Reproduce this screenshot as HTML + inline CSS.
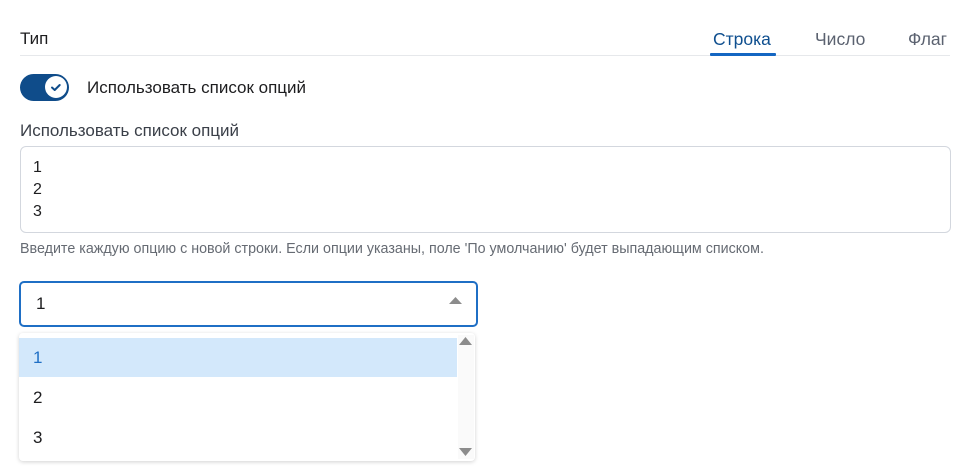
<!DOCTYPE html>
<html><head><meta charset="utf-8"><style>
*{box-sizing:border-box;margin:0;padding:0}
body{width:974px;height:471px;background:#fff;font-family:"Liberation Sans",Arial,sans-serif;color:#1d1d1f;position:relative;overflow:hidden}
.a{position:absolute}
</style></head><body>
<div class="a" style="left:20px;top:29px;font-size:17px;">Тип</div>
<div class="a" style="left:20px;top:55px;width:930px;height:1px;background:#e6e8eb"></div>
<div class="a" style="left:713px;top:29px;font-size:17.5px;color:#0f4f8f">Строка</div>
<div class="a" style="left:710px;top:53px;width:66px;height:3px;background:#1466c2;border-radius:1px"></div>
<div class="a" style="left:815px;top:29px;font-size:17.5px;color:#5b6270">Число</div>
<div class="a" style="left:908px;top:29px;font-size:17.5px;color:#5b6270">Флаг</div>

<div class="a" style="left:20px;top:74px;width:49px;height:27px;border-radius:14px;background:#0f4c8a"></div>
<div class="a" style="left:45px;top:76px;width:22px;height:22px;border-radius:50%;background:#fff"></div>
<svg class="a" style="left:45px;top:76px" width="22" height="22"><path d="M7 11.5l2.7 2.5 5-5" fill="none" stroke="#0f4c8a" stroke-width="2" stroke-linecap="round" stroke-linejoin="round"/></svg>
<div class="a" style="left:87px;top:78px;font-size:17px">Использовать список опций</div>

<div class="a" style="left:20px;top:121px;font-size:17px;color:#3a3f48">Использовать список опций</div>
<div class="a" style="left:20px;top:146px;width:931px;height:87px;border:1px solid #d3d7de;border-radius:6px"></div>
<div class="a" style="left:33px;top:157px;font-size:16px;line-height:22px">1<br>2<br>3</div>
<div class="a" style="left:20px;top:241px;font-size:14.3px;color:#666b73">Введите каждую опцию с новой строки. Если опции указаны, поле 'По умолчанию' будет выпадающим списком.</div>

<div class="a" style="left:19px;top:281px;width:459px;height:46px;border:2px solid #1f6fc5;border-radius:5px"></div>
<div class="a" style="left:36px;top:294px;font-size:17px">1</div>
<svg class="a" style="left:449px;top:297px" width="13" height="8"><path d="M0 7L6.5 0 13 7z" fill="#8c8c8c"/></svg>

<div class="a" style="left:19px;top:333px;width:456px;height:128px;background:#fff;border-radius:4px;box-shadow:0 1px 4px rgba(0,0,0,.18)"></div>
<div class="a" style="left:19px;top:338px;width:438px;height:39px;background:#d3e8fb"></div>
<div class="a" style="left:458px;top:335px;width:16px;height:124px;background:#fafafa"></div>
<svg class="a" style="left:459px;top:337px" width="13" height="9"><path d="M0 8L6.5 0 13 8z" fill="#8c8c8c"/></svg>
<svg class="a" style="left:459px;top:448px" width="13" height="9"><path d="M0 0L6.5 8 13 0z" fill="#8c8c8c"/></svg>
<div class="a" style="left:33px;top:348px;font-size:17px;color:#1f6fc5">1</div>
<div class="a" style="left:33px;top:388px;font-size:17px">2</div>
<div class="a" style="left:33px;top:428px;font-size:17px">3</div>
</body></html>
